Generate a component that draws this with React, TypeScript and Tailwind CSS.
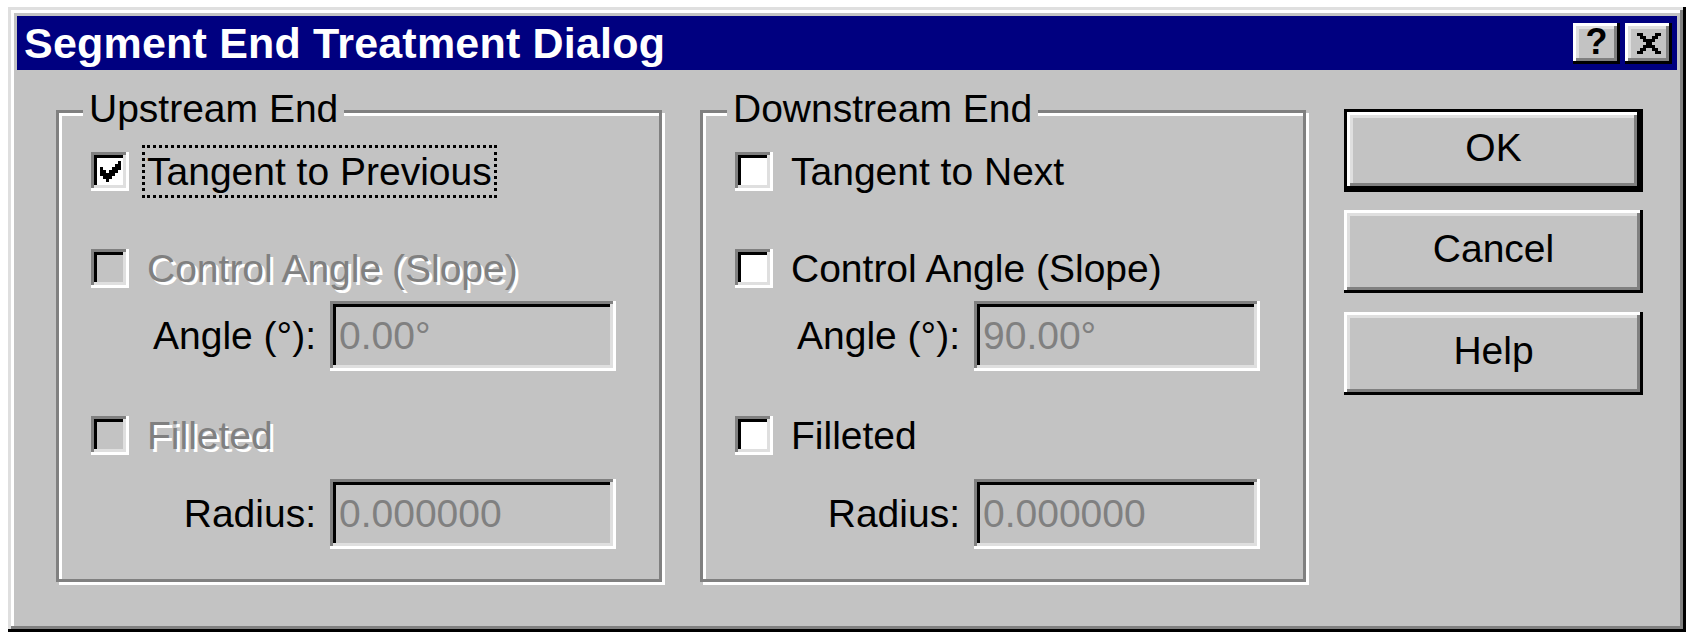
import React from 'react';

const raised =
  'shadow-[inset_-3px_-3px_0_#000,inset_3px_3px_0_#fff,inset_-6px_-6px_0_#808080,inset_6px_6px_0_#dfdfdf]';
const sunken =
  'shadow-[inset_-3px_-3px_0_#fff,inset_3px_3px_0_#808080,inset_-6px_-6px_0_#dfdfdf,inset_6px_6px_0_#000]';

const CHECK = [
  [6],
  [5, 6],
  [0, 4, 5, 6],
  [0, 1, 3, 4, 5],
  [0, 1, 2, 3, 4],
  [1, 2, 3],
  [2],
];

const CLOSE = [
  [0, 1, 6, 7],
  [1, 2, 5, 6],
  [2, 3, 4, 5],
  [3, 4],
  [2, 3, 4, 5],
  [1, 2, 5, 6],
  [0, 1, 6, 7],
];

const Pixels = ({ rows, w, h }: { rows: number[][]; w: number; h: number }) => (
  <svg width={w * 3} height={h * 3} viewBox={`0 0 ${w * 3} ${h * 3}`} shapeRendering="crispEdges">
    {rows.map((cols, y) =>
      cols.map((x) => <rect key={`${x}-${y}`} x={x * 3} y={y * 3} width={3} height={3} fill="#000" />)
    )}
  </svg>
);

const CheckBox = ({ checked, disabled }: { checked?: boolean; disabled?: boolean }) => (
  <div
    className={`w-[38px] h-[39px] shrink-0 flex items-center justify-center ${
      disabled ? 'bg-[#c3c3c3]' : 'bg-white'
    } ${sunken}`}
  >
    {checked && <Pixels rows={CHECK} w={7} h={7} />}
  </div>
);

const CheckRow = ({
  label,
  checked,
  disabled,
  focused,
  className,
}: {
  label: string;
  checked?: boolean;
  disabled?: boolean;
  focused?: boolean;
  className: string;
}) => (
  <div className={`flex items-center h-[53px] pl-[32px] ${className}`}>
    <CheckBox checked={checked} disabled={disabled} />
    <div
      className={`ml-[13px] h-[53px] flex items-center px-[2px] border-[3px] ${
        focused ? 'border-dotted border-black' : 'border-transparent'
      }`}
    >
      <span className={disabled ? 'text-[#808080] [text-shadow:3px_3px_0_#fff]' : ''}>{label}</span>
    </div>
  </div>
);

const FieldRow = ({ label, value, className }: { label: string; value: string; className: string }) => (
  <div className={`flex items-center h-[70px] ${className}`}>
    <div className="w-[257px] text-right whitespace-nowrap">{label}</div>
    <div className={`ml-[14px] w-[286px] h-[70px] flex items-center pl-[9px] text-[#808080] bg-[#c3c3c3] ${sunken}`}>
      {value}
    </div>
  </div>
);

const Group = ({
  title,
  tangent,
  upstream,
  angle,
}: {
  title: string;
  tangent: string;
  upstream?: boolean;
  angle: string;
}) => (
  <div className="w-[606px] h-[472px] shrink-0 border-[3px] border-[#808080] shadow-[inset_3px_3px_0_#fff,3px_3px_0_#fff] flex flex-col">
    <div className="-mt-[26px] ml-[24px] w-fit px-[6px] h-[44px] bg-[#c3c3c3]">{title}</div>
    <CheckRow className="mt-[14px]" label={tangent} checked={upstream} focused={upstream} />
    <CheckRow className="mt-[44px]" label="Control Angle (Slope)" disabled={upstream} />
    <FieldRow className="mt-[6px]" label="Angle (°):" value={angle} />
    <CheckRow className="mt-[38px]" label="Filleted" disabled={upstream} />
    <FieldRow className="mt-[17px]" label="Radius:" value="0.000000" />
  </div>
);

const PushButton = ({ label, primary, className }: { label: string; primary?: boolean; className: string }) => (
  <button
    className={`w-[299px] h-[83px] flex items-center justify-center pb-[6px] bg-[#c3c3c3] ${
      primary ? 'border-[3px] border-black' : ''
    } ${raised} ${className}`}
  >
    {label}
  </button>
);

export default function App() {
  return (
    <div className="w-[1696px] h-[640px] bg-white pt-[7px] pl-[8px] font-['Liberation_Sans',Arial,sans-serif] text-[39px] leading-[44px] text-black">
      <div className="w-[1678px] h-[625px] bg-[#c3c3c3] p-[9px] shadow-[inset_-3px_-3px_0_#000,inset_3px_3px_0_#dfdfdf,inset_-6px_-6px_0_#808080,inset_6px_6px_0_#fff]">
        <div className="h-[54px] bg-[#000080] flex items-center justify-between pl-[7px] pr-[5px]">
          <span className="text-white font-bold text-[43px] tracking-[0.2px] leading-[54px]">
            Segment End Treatment Dialog
          </span>
          <div className="flex gap-[5px]">
            <div className={`w-[47px] h-[41px] bg-[#c3c3c3] flex items-center justify-center ${raised}`}>
              <span className="font-bold text-[36px] leading-none pb-[2px]">?</span>
            </div>
            <div className={`w-[47px] h-[41px] bg-[#c3c3c3] flex items-center justify-center ${raised}`}>
              <Pixels rows={CLOSE} w={8} h={7} />
            </div>
          </div>
        </div>

        <div className="flex items-start">
          <div className="ml-[39px] mt-[40px]">
            <Group title="Upstream End" tangent="Tangent to Previous" upstream angle="0.00°" />
          </div>
          <div className="ml-[38px] mt-[40px]">
            <Group title="Downstream End" tangent="Tangent to Next" angle="90.00°" />
          </div>
          <div className="ml-[38px] mt-[39px] flex flex-col">
            <PushButton label="OK" primary className="" />
            <PushButton label="Cancel" className="mt-[18px]" />
            <PushButton label="Help" className="mt-[19px]" />
          </div>
        </div>
      </div>
    </div>
  );
}
